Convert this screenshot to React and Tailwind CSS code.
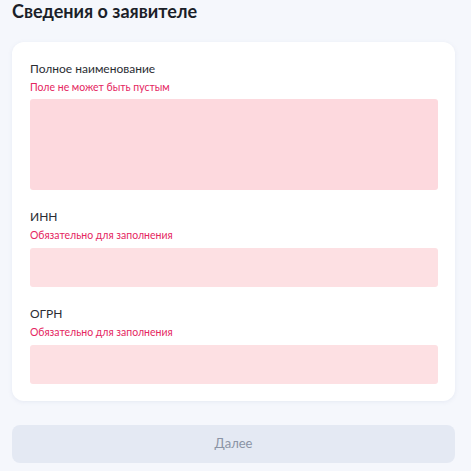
export default function App() {
  const fields = [
    { label: "Полное наименование", error: "Поле не может быть пустым", tall: true },
    { label: "ИНН", error: "Обязательно для заполнения" },
    { label: "ОГРН", error: "Обязательно для заполнения" },
  ];
  return (
    <div
      className="min-h-[471px] bg-[#f5f7fc] pl-3 pr-4 pt-[1px] pb-2"
      style={{ fontFamily: "Lato, 'Noto Sans', sans-serif" }}
    >
      <h1 className="text-[18px] leading-[20px] font-bold text-[#1b1f29]">Сведения о заявителе</h1>
      <div className="mt-[21px] bg-white rounded-xl pl-[18px] pr-[17px] pt-[19px] pb-[17px] shadow-[0_1px_4px_rgba(120,140,180,0.12)] flex flex-col gap-[19px]">
        {fields.map((f, i) => (
          <div key={i} className="flex flex-col">
            <label className="text-[12px] leading-[16px] text-[#2b2d33]">{f.label}</label>
            <span className="mt-[2px] text-[10.5px] leading-[16px] text-[#e5265f]">{f.error}</span>
            {f.tall ? (
              <textarea className="mt-[4px] h-[91px] w-full resize-none rounded-[3px] bg-[#fdd9de] outline-none" />
            ) : (
              <input className="mt-[5px] h-[39px] w-full rounded-[3px] bg-[#fde0e3] outline-none" />
            )}
          </div>
        ))}
      </div>
      <button
        disabled
        className="mt-[24px] w-full h-[38px] rounded-lg bg-[#e4e9f3] text-[13px] text-[#8b94a5]"
      >
        Далее
      </button>
    </div>
  );
}
